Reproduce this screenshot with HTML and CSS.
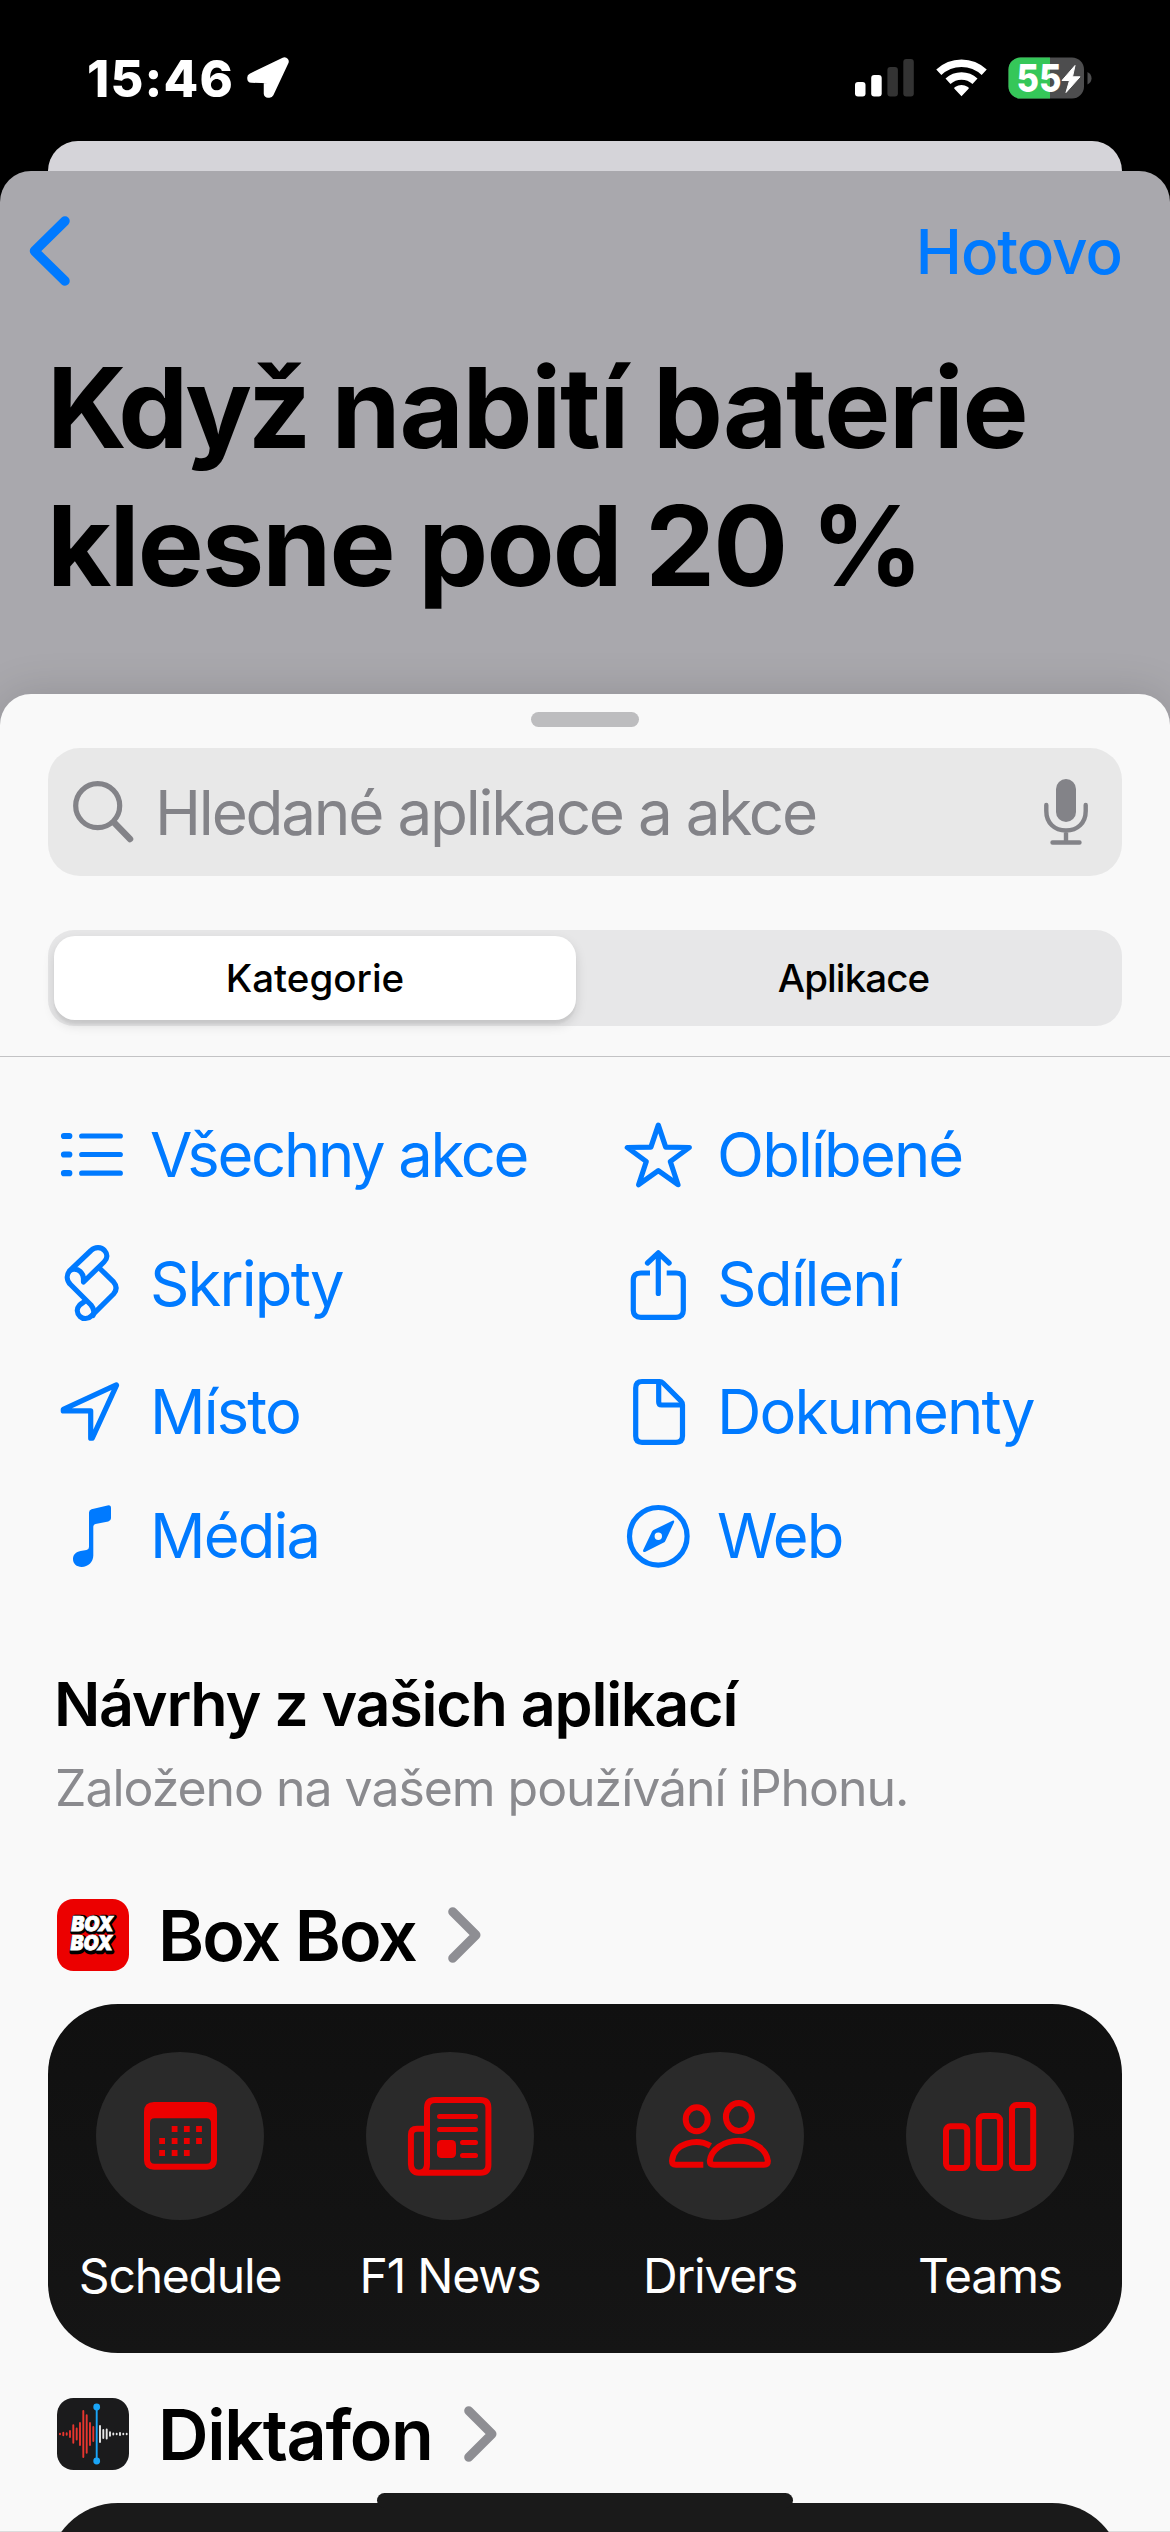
FILE: index.html
```html
<!DOCTYPE html>
<html lang="cs">
<head>
<meta charset="utf-8">
<title>Když nabití baterie klesne pod 20 %</title>
<link rel="stylesheet" href="styles.css">
</head>
<body>
<div class="screen">
  <header class="status">
    <span class="status-time">15:46</span>
    <svg class="status-arrow" width="42" height="42" viewBox="0 0 42 42"><path d="M37.500 4.500L4.500 20.500V21.500L21 22V36.500L22.500 36.500Z" fill="#fff" stroke="#fff" stroke-width="8.500" stroke-linejoin="round"/></svg>
    <div class="status-right">
      <svg width="59" height="38" viewBox="0 0 59 38"><g fill="#fff"><rect x="0" y="23" width="10.500" height="14.500" rx="3"/><rect x="16.200" y="16" width="10.500" height="21.500" rx="3"/></g><g fill="#333"><rect x="32.400" y="8" width="10.500" height="29.500" rx="3"/><rect x="48.300" y="0" width="10.500" height="37.500" rx="3"/></g></svg>
      <svg width="51" height="38" viewBox="0 0 51 38"><g fill="none" stroke="#fff" stroke-width="7.400"><path d="M2.800 13.300A33 33 0 0 1 48.200 13.300"/><path d="M12 22.300A20 20 0 0 1 39 22.300"/></g><path d="M25.500 37.200L18.200 29.600Q18 28.500 19 28Q25.500 23.800 32 28Q33 28.500 32.800 29.600Z" fill="#fff"/></svg>
      <svg width="84" height="42" viewBox="0 0 84 42"><defs><clipPath id="charge"><rect width="42" height="42"/></clipPath></defs><rect x=".5" y=".5" width="75.500" height="41" rx="12" fill="#4d4d4e"/><rect x=".5" y=".5" width="75.500" height="41" rx="12" fill="#35c759" clip-path="url(#charge)"/><path d="M79.500 15Q83.500 17 83.500 21.300Q83.500 25.500 79.500 27.500Z" fill="#4d4d4e"/><text class="battery-level" x="8.500" y="35" textLength="45" lengthAdjust="spacingAndGlyphs">55</text><path d="M67 8.500L54 23.500H61.500L58 35.500L72 19.800H64.500Z" fill="#fff" stroke="#fff" stroke-linejoin="round"/></svg>
    </div>
  </header>

  <div class="back-card"></div>

  <section class="front-card">
    <nav class="nav">
      <svg width="41" height="70" viewBox="0 0 41 70"><path d="M36 5L5.500 35L36 65" fill="none" stroke="#007aff" stroke-width="9.500" stroke-linecap="round" stroke-linejoin="round"/></svg>
      <span class="done">Hotovo</span>
    </nav>
    <h1 class="title"><span class="title-lead">Když</span> <span class="title-rest">nabití baterie</span><br>klesne pod 20 %</h1>
  </section>

  <main class="sheet">
    <div class="grabber"></div>
    <div class="search">
      <svg width="61" height="62" viewBox="0 0 61 62"><g fill="none" stroke="#838388"><circle cx="24.700" cy="24.700" r="22" stroke-width="5.200"/><path d="M41 41.500L57 58" stroke-width="6.500" stroke-linecap="round"/></g></svg>
      <span class="search-text">Hledané aplikace a akce</span>
      <svg width="44" height="66" viewBox="0 0 44 66"><rect x="12" y="0" width="20" height="43" rx="10" fill="#838388"/><g fill="none" stroke="#838388" stroke-width="4.400" stroke-linecap="round"><path d="M2.300 26V32C2.300 44 10.500 51.500 22 51.500S41.700 44 41.700 32V26M22 52V63M8.500 63.500H35.500"/></g></svg>
    </div>
    <div class="segmented">
      <span class="segment segment-on">Kategorie</span>
      <span class="segment segment-off">Aplikace</span>
    </div>
    <div class="divider"></div>

    <div class="categories">
      <div class="category">
        <svg width="88" height="89" viewBox="0 0 88 89"><g stroke="#007aff" stroke-linecap="round"><path d="M17 26H22.300M17 44.500H22.300M17 63.200H22.300" stroke-width="6.200"/><path d="M34.700 26H73.300M34.700 44.500H73.300M34.700 63.200H73.300" stroke-width="5.200"/></g></svg>
        <span class="category-name tight">Všechny akce</span>
      </div>
      <div class="category">
        <svg width="88" height="89" viewBox="0 0 88 89"><path class="line" d="M44.300 15.200L51.700 37.200L75.300 37.500L56.300 51.500L64 74.700L44.300 60.700L24.600 74.700L32.300 51.500L13.300 37.500L36.900 37.200Z"/></svg>
        <span class="category-name">Oblíbené</span>
      </div>
      <div class="category">
        <svg width="88" height="89" viewBox="0 0 88 89"><g class="line"><path d="M22.500 32L44 11.500C48 7.500 54.500 7.800 57.500 11.500C60.800 15 60.500 19.500 57 23L36.500 43V39.500C35.500 30.500 27 28 22.500 32C19.300 36 19.500 41.500 23.500 45.500L44 66C47 69.500 47.800 72.500 46 76.500"/><path d="M52.800 29.500L66.500 42.800C70 47 70 51 66.500 55L44.500 76.800C41 80.300 36 80.300 33 77.500C29.500 74 29.500 69.500 32.500 66.200C34 64.500 36.500 63.500 38.300 62"/></g></svg>
        <span class="category-name">Skripty</span>
      </div>
      <div class="category">
        <svg width="88" height="89" viewBox="0 0 88 89"><g class="line"><path class="butt" d="M36 34H27Q19.300 34 19.300 41V71.300Q19.300 78.300 27 78.300H62Q69.300 78.300 69.300 71.300V41Q69.300 34 62 34H52.700"/><path d="M44.300 14.500V54.500M33.500 24L44.300 13.800L55.100 24"/></g></svg>
        <span class="category-name loose">Sdílení</span>
      </div>
      <div class="category">
        <svg width="88" height="89" viewBox="0 0 88 89"><path class="line" d="M69.300 17.800L16.300 42.300V43.900H43.700V71.200H45.300L69.600 18.200Z"/></svg>
        <span class="category-name">Místo</span>
      </div>
      <div class="category">
        <svg width="88" height="89" viewBox="0 0 88 89"><g class="line"><path d="M28 14.500H45.500Q47.500 14.500 49 16L66.800 33.800Q68.500 35.500 68.500 38V69Q68.500 75.300 62 75.300H28Q21.700 75.300 21.700 69V21Q21.700 14.500 28 14.500Z"/><path d="M44.700 15.500V35Q44.700 38 47.700 38H67.500"/></g></svg>
        <span class="category-name">Dokumenty</span>
      </div>
      <div class="category">
        <svg width="88" height="89" viewBox="0 0 88 89"><path fill="#007aff" d="M42 21.500Q42 19 44.500 18.300L60.500 14.500Q64 13.800 64 17V27.300Q64 29.800 61.300 30.400L48.500 33Q46.300 33.500 46.300 35.500V64.500C46.300 71 41 75.900 34.700 75.900C29.500 75.900 26 72.800 26 68C26 63.500 29 61 33.500 60L39.500 58.900Q42 58.400 42 56Z"/></svg>
        <span class="category-name">Média</span>
      </div>
      <div class="category">
        <svg width="88" height="89" viewBox="0 0 88 89"><circle class="line" cx="44.300" cy="45.300" r="28.800"/><path fill="#007aff" fill-rule="evenodd" d="M58.500 29.800Q60.800 29 60 31.500L51.300 50Q50.800 51 49.800 51.500L31 60.900Q28.500 61.500 29.200 59L38 40.500Q38.500 39.500 39.500 39ZM44.300 41.600A3.700 3.700 0 1 0 44.300 49A3.700 3.700 0 1 0 44.300 41.600Z"/></svg>
        <span class="category-name">Web</span>
      </div>
    </div>

    <h2 class="heading">Návrhy z vašich aplikací</h2>
    <p class="subheading">Založeno na vašem používání iPhonu.</p>

    <div class="app-row app-row-first">
      <svg width="72" height="72" viewBox="0 0 72 72"><rect width="72" height="72" rx="16.500" fill="#ec0000"/><g class="logo" transform="skewX(-8)"><g fill="#000" stroke="#000" stroke-width="4.500" stroke-linejoin="round"><text x="19" y="33.500" textLength="42" lengthAdjust="spacingAndGlyphs">BOX</text><text x="21" y="53" textLength="42" lengthAdjust="spacingAndGlyphs">BOX</text></g><g fill="#fff" stroke="#fff" stroke-width=".9"><text x="18" y="32" textLength="42" lengthAdjust="spacingAndGlyphs">BOX</text><text x="20" y="51" textLength="42" lengthAdjust="spacingAndGlyphs">BOX</text></g></g></svg>
      <span class="app-name app-name-box">Box Box</span>
      <svg width="33" height="56" viewBox="0 0 33 56"><path class="chevron" d="M4.700 4.700L28 28L4.700 51.300"/></svg>
    </div>

    <div class="actions">
      <div class="action">
        <svg class="disc" width="168" height="168" viewBox="0 0 168 168"><path fill="#ec0000" fill-rule="evenodd" d="M58 50H111Q121 50 121 60V108Q121 117.700 111 117.700H58Q48 117.700 48 108V60Q48 50 58 50ZM58.500 66.300Q54 66.300 54 71V107Q54 111.700 58.500 111.700H110.500Q115 111.700 115 107V71Q115 66.300 110.500 66.300Z"/><path stroke="#ec0000" stroke-width="5.800" d="M75.700 77h5.800M87.900 77h5.800M100.100 77h5.800M63.200 89h5.800M75.700 89h5.800M87.900 89h5.800M100.100 89h5.800M63.200 101h5.800M75.700 101h5.800M87.900 101h5.800"/></svg>
        <span class="action-name">Schedule</span>
      </div>
      <div class="action">
        <svg class="disc" width="168" height="168" viewBox="0 0 168 168"><g class="red"><path d="M69 48H114.500Q122.400 48 122.400 56V112.700Q122.400 120.700 114.500 120.700H53C47.500 120.700 44.900 117 44.900 112V83Q44.900 76.700 51 76.700H61V56Q61 48 69 48ZM61 76V112Q61 120.700 53 120.700"/><path class="thin" d="M73.500 64.400H109.500M73.500 77.400H109.500M96.500 90.400H109.500M96.500 103.400H109.500"/></g><rect x="71" y="88" width="19" height="18" rx="4.500" fill="#ec0000"/></svg>
        <span class="action-name">F1 News</span>
      </div>
      <div class="action">
        <svg class="disc" width="168" height="168" viewBox="0 0 168 168"><g class="red"><ellipse cx="60.700" cy="67.200" rx="11" ry="12"/><ellipse cx="102.900" cy="65" rx="13" ry="14"/><path d="M78 112.800Q73.800 112.800 73.800 109C75 98 87 88.800 102.800 88.800S130.800 98 131.900 109Q131.900 112.800 128 112.800Z"/><path class="butt" d="M74.500 93.800C61 86 37.500 90.500 36 109Q36 112.800 40 112.800H67.300"/></g></svg>
        <span class="action-name">Drivers</span>
      </div>
      <div class="action">
        <svg class="disc" width="168" height="168" viewBox="0 0 168 168"><g class="red"><rect x="40" y="74.300" width="21.200" height="41.700" rx="4.500"/><rect x="72.800" y="64" width="21.300" height="52" rx="4.500"/><rect x="106" y="53" width="21.200" height="63" rx="4.500"/></g></svg>
        <span class="action-name">Teams</span>
      </div>
    </div>

    <div class="app-row app-row-next">
      <svg width="72" height="72" viewBox="0 0 72 72"><rect width="72" height="72" rx="16.500" fill="#1b1b1c"/><g stroke-width="1.900" stroke-linecap="round"><path stroke="#e8362f" d="M3 35.700V36.300M6.300 34.700V37.300M9.700 35.300V36.700M13 33V39M16.300 27.200V44.800M19.700 30.500V41.500M23 25V47M26.300 13V59M29.700 17.300V54.700M33 25V47M36.300 29V43"/><path stroke="#e6e6e6" d="M43 28V44M46.300 32V40M49.700 31.500V40.500M53 34.200V37.800M56.300 35.500V36.500M59.700 35.700V36.300M63 35V37M66.300 35.700V36.300M69.700 35.700V36.300"/><path stroke="#1aa5f7" d="M39.700 9V63"/></g><circle cx="39.700" cy="9" r="3.400" fill="#1aa5f7"/><circle cx="39.700" cy="63" r="3.400" fill="#1aa5f7"/></svg>
      <span class="app-name app-name-memo">Diktafon</span>
      <svg width="33" height="56" viewBox="0 0 33 56"><path class="chevron" d="M4.700 4.700L28 28L4.700 51.300"/></svg>
    </div>
    <div class="actions-next"></div>
  </main>
  <div class="home-indicator"></div>
</div>
</body>
</html>
```
FILE: styles.css
```css
* { box-sizing: border-box; }

body {
  margin: 0;
  background: #000;
  font-family: Inter, "Liberation Sans", sans-serif;
  color: #000;
}

svg { display: block; flex: none; }

.screen {
  position: relative;
  display: flex;
  flex-direction: column;
  width: 1170px;
  height: 2532px;
  overflow: hidden;
}

/* Status bar */
.status {
  display: flex;
  align-items: center;
  flex: none;
  height: 141px;
  padding: 15px 78px 0 87px;
  color: #fff;
}
.status-time { width: 160px; font-size: 50.500px; font-weight: 800; letter-spacing: 1.2px; }
.status-right { display: flex; align-items: center; gap: 21.500px; margin-left: auto; }
.battery-level { font-size: 38.500px; font-weight: 800; fill: #fff; }

/* Stacked cards behind the sheet */
.back-card {
  flex: none;
  height: 30px;
  margin: 0 48px;
  border-radius: 30px 30px 0 0;
  background: #d5d4d9;
}
.front-card {
  flex: none;
  height: 573px;
  border-radius: 31px 31px 0 0;
  background: #a9a8ad;
}
.nav {
  display: flex;
  align-items: center;
  justify-content: space-between;
  height: 160px;
  padding: 0 48px 0 29px;
}
.done { font-size: 62px; font-weight: 500; letter-spacing: -1px; color: #007aff; }
.title {
  margin: 8px 0 0 47px;
  font-size: 111px;
  font-weight: 700;
  line-height: 138px;
  letter-spacing: -1.85px;
  white-space: nowrap;
}
.title-lead { letter-spacing: -4.2px; }
.title-rest { letter-spacing: -1.3px; }

/* Sheet */
.sheet {
  position: relative;
  flex: none;
  height: 1838px;
  margin-top: -50px;
  padding-top: 18px;
  border-radius: 31px 31px 0 0;
  background: linear-gradient(#dcdcdc, #dcdcdc) bottom / 100% 1px no-repeat #f9f9f9;
  box-shadow: 0 0 45px rgba(0, 0, 0, .14);
}
.grabber { width: 108px; height: 15px; margin: 0 auto; border-radius: 8px; background: #bdbdbf; }

.search {
  display: flex;
  align-items: center;
  height: 128px;
  margin: 21px 48px 0;
  padding: 0 34px 0 25px;
  border-radius: 32px;
  background: #e8e8e8;
}
.search-text {
  flex: 1;
  margin-left: 21px;
  font-size: 62px;
  letter-spacing: -2.23px;
  color: #838388;
}

.segmented {
  display: flex;
  height: 96px;
  margin: 54px 48px 0;
  padding: 6px;
  border-radius: 26px;
  background: #e7e7e8;
}
.segment {
  display: flex;
  align-items: center;
  justify-content: center;
  font-size: 38.500px;
  font-weight: 500;
}
.segment-on {
  width: 522px;
  border-radius: 21px;
  background: #fff;
  box-shadow: 0 5px 12px rgba(0, 0, 0, .13), 0 4px 2px rgba(0, 0, 0, .04);
}
.segment-off { flex: 1; padding-left: 15px; font-weight: 450; letter-spacing: -.9px; }
.divider { height: 1px; margin-top: 30px; background: #c3c3c5; }

/* Categories */
.categories {
  display: grid;
  grid-template-columns: 567px 1fr;
  grid-template-rows: 129px 129px 127px 121px;
  padding: 33px 0 0 47px;
}
.category { display: flex; align-items: center; gap: 15px; }
.category-name { font-size: 61.500px; letter-spacing: -1.85px; color: #007aff; }
.category-name.tight { letter-spacing: -2.3px; }
.category-name.loose { letter-spacing: -1.5px; }
.line { fill: none; stroke: #007aff; stroke-width: 5.200px; stroke-linecap: round; stroke-linejoin: round; }
.butt { stroke-linecap: butt; }

.heading {
  margin: 72px 0 0 54px;
  font-size: 61px;
  font-weight: 600;
  line-height: 72px;
  letter-spacing: -1.25px;
}
.subheading {
  margin: 18px 0 0 55px;
  font-size: 50px;
  line-height: 60px;
  letter-spacing: -1.05px;
  color: #8a8a8e;
}

/* App suggestions */
.app-row { display: flex; align-items: center; height: 72px; padding-left: 57px; }
.app-row-first { margin-top: 81px; }
.app-row-next { margin-top: 45px; }
.app-name { margin-left: 29px; font-size: 70px; font-weight: 600; }
.app-name-box { width: 290px; letter-spacing: -2px; }
.app-name-memo { width: 306px; letter-spacing: -1.3px; }
.chevron { fill: none; stroke: #8e8e93; stroke-width: 9px; stroke-linecap: round; stroke-linejoin: round; }
.logo { font-size: 20.500px; font-weight: 900; }

.actions {
  display: flex;
  justify-content: space-between;
  height: 349px;
  margin: 33px 48px 0;
  padding: 48px 48px 0;
  border-radius: 70px;
  background: linear-gradient(#101010, #151515);
}
.action {
  display: flex;
  flex-direction: column;
  align-items: center;
  gap: 26.500px;
  width: 168px;
}
.disc { border-radius: 50%; background: #2a2a2a; }
.red { fill: none; stroke: #ec0000; stroke-width: 6px; stroke-linejoin: round; }
.thin { stroke-width: 5px; stroke-linecap: round; }
.action-name { font-size: 48px; line-height: 58px; letter-spacing: -1.2px; color: #fff; white-space: nowrap; }
.actions-next {
  height: 349px;
  margin: 33px 48px 0;
  border-radius: 70px;
  background: #1a1a1a;
}

.home-indicator {
  position: absolute;
  left: 377px;
  top: 2493px;
  width: 416px;
  height: 15px;
  border-radius: 8px;
  background: #1a1a1a;
}
```
